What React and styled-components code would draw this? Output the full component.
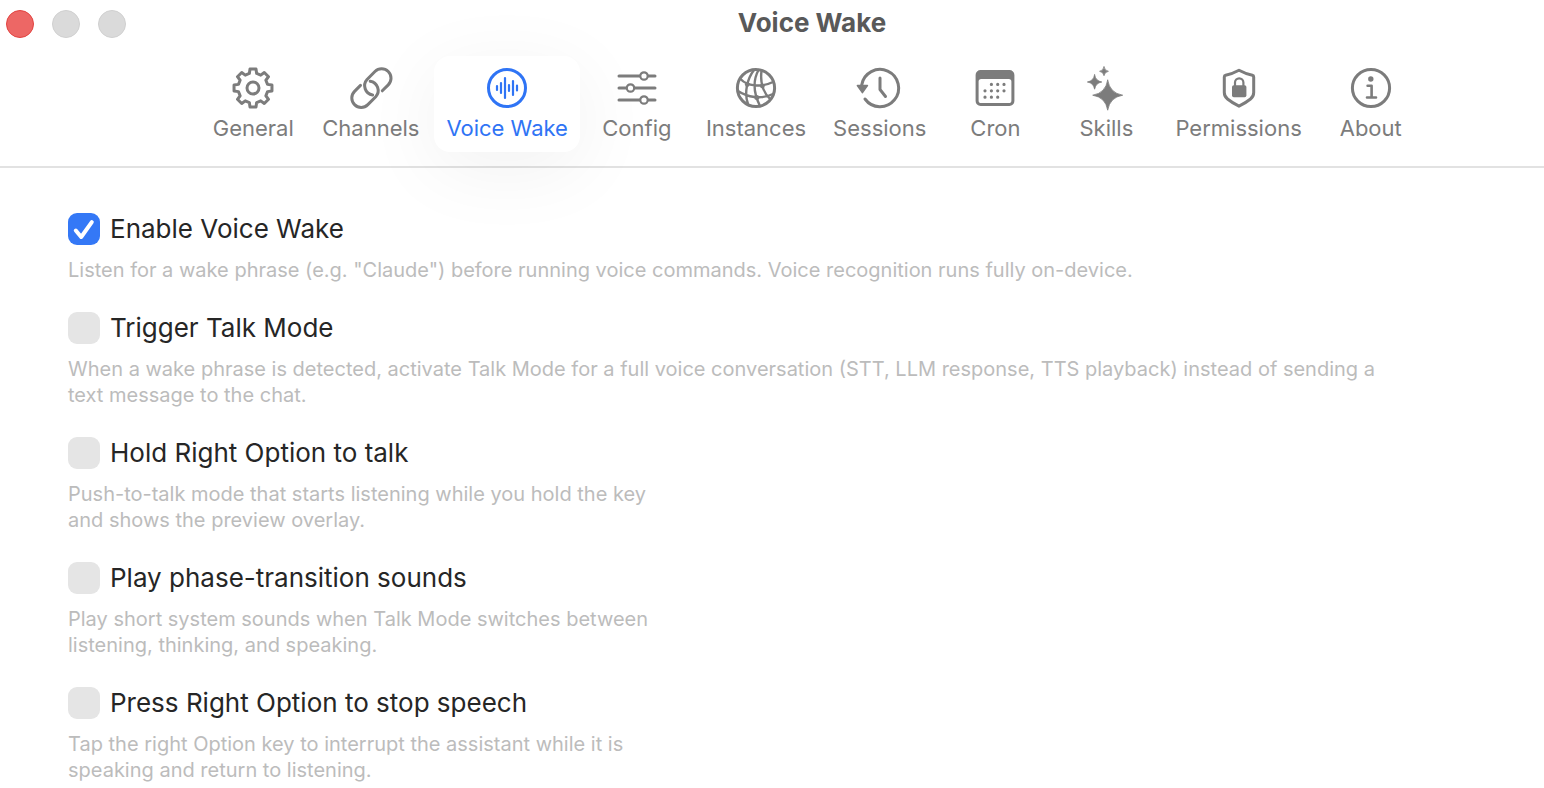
import React, { useState } from 'react'
import styled, { createGlobalStyle } from 'styled-components'

const starPath = (cx, cy, r) => {
    const k = r * 0.14
    return `M${cx} ${cy - r}Q${cx + k} ${cy - k} ${cx + r} ${cy}Q${cx + k} ${cy + k} ${cx} ${cy + r}Q${cx - k} ${cy + k} ${cx - r} ${cy}Q${cx - k} ${cy - k} ${cx} ${cy - r}Z`
}

// eight teeth, each one is four points around the centre
const gearPath = () => {
    const points = []
    for (let i = 0; i < 8; i++) {
        const shape = [[-14, 15], [-9, 19.2], [9, 19.2], [14, 15]]
        shape.forEach(([deg, r]) => {
            const a = ((i * 45 + deg) * Math.PI) / 180
            points.push(`${(22 + r * Math.sin(a)).toFixed(2)} ${(22 - r * Math.cos(a)).toFixed(2)}`)
        })
    }
    return `M${points.join('L')}Z`
}

const GearIcon = () => (
    <Icon>
        <path d={gearPath()} />
        <circle cx="22" cy="22" r="6" />
    </Icon>
)

const linkHalf = 'M33.3 24.8L39.25 18.85A9.4 9.4 0 0 0 25.95 5.55L18.05 13.45A9.4 9.4 0 0 0 23.6 29'

const LinkIcon = () => (
    <Icon>
        <path d={linkHalf} />
        <path d={linkHalf} transform="rotate(180 22.4 22.1)" />
    </Icon>
)

const WaveIcon = () => (
    <Icon>
        <circle cx="22" cy="22" r="18.5" />
        <path strokeWidth="2.2" d="M12 20v4M16 17v10M20 12v20M24 19v6M28 15v14M32 19.5v5" />
    </Icon>
)

const SlidersIcon = () => (
    <Icon>
        <path d="M4 10h36M4 22h36M4 34h36" />
        <g fill="#fff" strokeWidth="2.2">
            <circle cx="29" cy="10" r="3.7" />
            <circle cx="15.5" cy="22" r="3.7" />
            <circle cx="29" cy="34" r="3.7" />
        </g>
    </Icon>
)

const GlobeIcon = () => (
    <Icon>
        <circle cx="22" cy="22" r="18.6" />
        <path strokeWidth="2.4" d="M20 4C13 13 10 27 14 38M24.5 4C18 16 20 28 26 40M27.5 5C26 17 30 27 36 33M6.5 13C13 20 27 22 39 16M4 25C13 31 27 34 39 28" />
        <g fill="currentColor" stroke="none">
            <circle cx="13.3" cy="18.6" r="2.4" />
            <circle cx="28.4" cy="20" r="2.4" />
            <circle cx="22.8" cy="31.4" r="2.5" />
        </g>
    </Icon>
)

const HistoryIcon = () => (
    <Icon>
        <path d="M3.7 19A18.6 18.6 0 1 1 7 33" />
        <path d="M22 12v11.5l5.5 7" />
        <path fill="currentColor" strokeWidth="1.6" d="M-.6 19.6h10L4.4 26.6z" />
    </Icon>
)

const CalendarIcon = () => (
    <Icon>
        <path
            fill="currentColor"
            stroke="none"
            fillRule="evenodd"
            d="M7.6 4h28.8a5 5 0 0 1 5 5v26a5 5 0 0 1-5 5H7.6a5 5 0 0 1-5-5V9a5 5 0 0 1 5-5zM8.2 13a2.6 2.6 0 0 0-2.6 2.6v18.8a2.6 2.6 0 0 0 2.6 2.6h27.6a2.6 2.6 0 0 0 2.6-2.6V15.6a2.6 2.6 0 0 0-2.6-2.6z"
        />
        <path strokeWidth="3.2" d="M18.4 18.4h.01M24.7 18.4h.01M31 18.4h.01M12 24.8h.01M18.4 24.8h.01M24.7 24.8h.01M31 24.8h.01M12 31.2h.01M18.4 31.2h.01M24.7 31.2h.01" />
    </Icon>
)

const SparklesIcon = () => (
    <Icon>
        <g fill="currentColor" strokeWidth="0.8">
            <path d={starPath(23.7, 29.2, 15)} />
            <path d={starPath(10.6, 16, 7.2)} />
            <path d={starPath(20, 5.3, 4.4)} />
        </g>
    </Icon>
)

const ShieldIcon = () => (
    <Icon>
        <path d="M22 4.2Q29 8 35.4 9.2Q36.7 9.5 36.7 11V26.5Q36.7 30.5 33.5 33Q28.5 37 22 40.2Q15.5 37 10.5 33Q7.3 30.5 7.3 26.5V11Q7.3 9.5 8.6 9.2Q15 8 22 4.2Z" />
        <rect x="15" y="19.3" width="14.4" height="12" rx="1.8" fill="currentColor" stroke="none" />
        <path strokeWidth="2.2" d="M18 20v-3.5a4.2 4.2 0 0 1 8.4 0V20" />
    </Icon>
)

const InfoIcon = () => (
    <Icon>
        <circle cx="22" cy="22" r="18.6" />
        <circle cx="21.8" cy="13" r="2.7" fill="currentColor" stroke="none" />
        <path strokeWidth="2.6" d="M18.6 19.8h4v11.7M18 31.5h9" />
    </Icon>
)

const tabs = [
    { name: 'General', icon: GearIcon },
    { name: 'Channels', icon: LinkIcon },
    { name: 'Voice Wake', icon: WaveIcon },
    { name: 'Config', icon: SlidersIcon },
    { name: 'Instances', icon: GlobeIcon },
    { name: 'Sessions', icon: HistoryIcon },
    { name: 'Cron', icon: CalendarIcon },
    { name: 'Skills', icon: SparklesIcon },
    { name: 'Permissions', icon: ShieldIcon },
    { name: 'About', icon: InfoIcon },
]

const options = [
    {
        id: 'enable',
        label: 'Enable Voice Wake',
        text: 'Listen for a wake phrase (e.g. "Claude") before running voice commands. Voice recognition runs fully on-device.',
        wide: true,
        on: true,
    },
    {
        id: 'trigger',
        label: 'Trigger Talk Mode',
        text: 'When a wake phrase is detected, activate Talk Mode for a full voice conversation (STT, LLM response, TTS playback) instead of sending a text message to the chat.',
        wide: true,
    },
    {
        id: 'hold',
        label: 'Hold Right Option to talk',
        text: 'Push-to-talk mode that starts listening while you hold the key and shows the preview overlay.',
    },
    {
        id: 'sounds',
        label: 'Play phase-transition sounds',
        text: 'Play short system sounds when Talk Mode switches between listening, thinking, and speaking.',
    },
    {
        id: 'stop',
        label: 'Press Right Option to stop speech',
        text: 'Tap the right Option key to interrupt the assistant while it is speaking and return to listening.',
    },
]

const Option = ({ id, label, text, wide, on }) => {
    const [checked, setChecked] = useState(Boolean(on))
    return (
        <Item>
            <Label htmlFor={id}>
                <Box>
                    <Check
                        type="checkbox"
                        id={id}
                        checked={checked}
                        aria-describedby={`${id}-text`}
                        onChange={(e) => setChecked(e.target.checked)}
                    />
                    {checked && (
                        <Tick viewBox="0 0 32 32" aria-hidden="true">
                            <path d="M7.8 17.5l5.4 6.5L23.8 9.2" />
                        </Tick>
                    )}
                </Box>
                {label}
            </Label>
            <Hint id={`${id}-text`} $wide={wide}>{text}</Hint>
        </Item>
    )
}

const App = () => {
    const [active, setActive] = useState('Voice Wake')
    return (
        <>
            <GlobalStyle />
            <Header>
                <Lights>
                    <Light $close aria-label="Close" />
                    <Light aria-label="Minimize" />
                    <Light aria-label="Zoom" />
                </Lights>
                <Toolbar>
                    <Title>Voice Wake</Title>
                    <Tabs>
                        {tabs.map(({ name, icon: TabIcon }) => (
                            <Tab key={name} $active={name === active} onClick={() => setActive(name)}>
                                <TabIcon />
                                {name}
                            </Tab>
                        ))}
                    </Tabs>
                </Toolbar>
            </Header>
            <Main>
                {options.map((option) => (
                    <Option key={option.id} {...option} />
                ))}
            </Main>
        </>
    )
}

export default App

const GlobalStyle = createGlobalStyle`
    *{
        box-sizing:border-box;
    }
    body{
        margin:0;
        background-color:#fff;
        color:#262626;
        font-family:Inter, "Liberation Sans", sans-serif;
    }
    button{
        font-family:inherit;
        border:none;
        cursor:pointer;
    }
`

const Header = styled.header`
    display:flex;
    align-items:flex-start;
    border-bottom:2px solid #e2e2e2;
`

const Lights = styled.div`
    display:flex;
    flex:none;
    gap:18px;
    width:80px;
    padding:10px 0 0 6px;
`

const Light = styled.button`
    flex:none;
    width:28px;
    height:28px;
    padding:0;
    border-radius:50%;
    border:1px solid ${({ $close }) => ($close ? '#e24340' : '#d0d0d0')};
    background-color:${({ $close }) => ($close ? '#ed6765' : '#dadada')};
`

const Toolbar = styled.div`
    flex:1;
    padding-bottom:14px;
`

const Title = styled.h1`
    margin:0;
    padding:7px 0 17px;
    font-size:26px;
    line-height:32px;
    font-weight:700;
    text-align:center;
    color:#595959;
`

const Tabs = styled.nav`
    display:flex;
    justify-content:center;
    gap:3px;
`

const Tab = styled.button`
    display:flex;
    flex-direction:column;
    align-items:center;
    gap:4px;
    min-width:108px;
    height:96px;
    padding:10px 12px;
    border-radius:16px;
    font-size:22px;
    line-height:28px;
    white-space:nowrap;
    color:${({ $active }) => ($active ? '#2f74f5' : '#7c7c7c')};
    background-color:${({ $active }) => ($active ? '#fff' : 'transparent')};
    box-shadow:${({ $active }) => ($active ? '0 16px 80px rgba(0, 0, 0, 0.06)' : 'none')};
`

const Icon = styled.svg.attrs({ viewBox: '0 0 44 44', 'aria-hidden': true })`
    flex:none;
    width:44px;
    height:44px;
    overflow:visible;
    fill:none;
    stroke:currentColor;
    stroke-width:3;
    stroke-linecap:round;
    stroke-linejoin:round;
`

const Main = styled.main`
    display:flex;
    flex-direction:column;
    gap:29px;
    padding:45px 68px 0;
`

const Item = styled.section`
    display:flex;
    flex-direction:column;
    align-items:flex-start;
    gap:12px;
`

const Label = styled.label`
    display:flex;
    align-items:center;
    gap:10px;
    font-size:26px;
    line-height:32px;
    cursor:pointer;
`

const Box = styled.span`
    display:grid;
    width:32px;
    height:32px;
    > *{
        grid-area:1 / 1;
    }
`

const Check = styled.input`
    appearance:none;
    width:32px;
    height:32px;
    margin:0;
    border-radius:9px;
    background-color:#e5e5e5;
    &:checked{
        background-color:#3478f6;
    }
`

const Tick = styled.svg`
    width:32px;
    height:32px;
    pointer-events:none;
    fill:none;
    stroke:#fff;
    stroke-width:4;
    stroke-linecap:round;
    stroke-linejoin:round;
`

const Hint = styled.p`
    margin:0;
    max-width:${({ $wide }) => ($wide ? '1340px' : '600px')};
    font-size:20px;
    line-height:26px;
    color:#bcbcbc;
`
